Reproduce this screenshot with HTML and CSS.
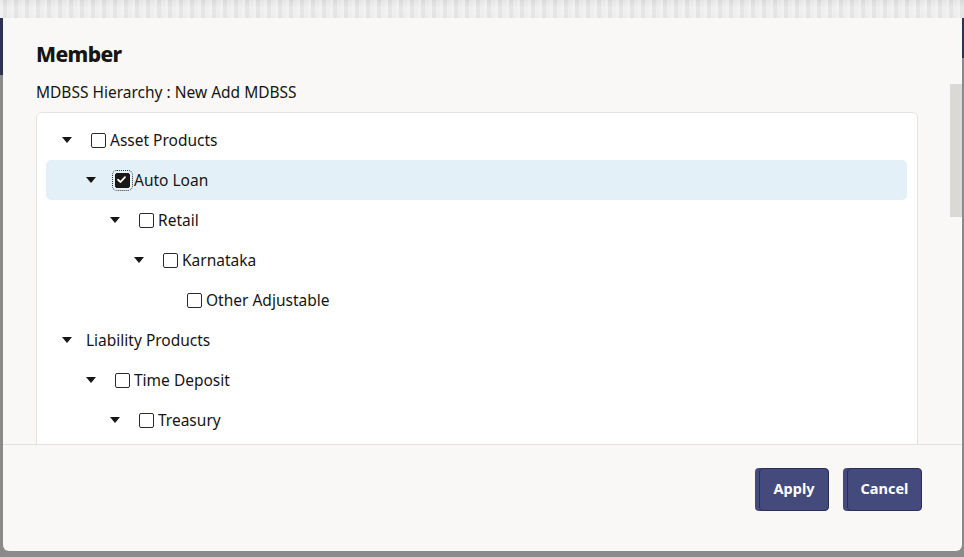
FILE: index.html
```html
<!DOCTYPE html>
<html lang="en">
<head>
<meta charset="utf-8">
<title>Member</title>
<link rel="stylesheet" href="styles.css">
</head>
<body>
<div class="top-band"></div>
<div class="stage">
  <div class="edge edge-left"></div>
  <div class="modal">
    <div class="modal-body">
      <div class="content">
        <h1 class="title">Member</h1>
        <div class="subtitle">MDBSS Hierarchy : New Add MDBSS</div>
        <div class="tree">
          <div class="row lvl0"><span class="caret"></span><span class="cb"></span><span class="label">Asset Products</span></div>
          <div class="row lvl1 selected"><span class="caret"></span><span class="cb checked"><svg viewBox="0 0 15 15" width="15" height="15"><path d="M4 7.8 L6.5 10 L11 5.2" fill="none" stroke="#fff" stroke-width="1.8" stroke-linecap="round" stroke-linejoin="round"/></svg></span><span class="label">Auto Loan</span></div>
          <div class="row lvl2"><span class="caret"></span><span class="cb"></span><span class="label">Retail</span></div>
          <div class="row lvl3"><span class="caret"></span><span class="cb"></span><span class="label">Karnataka</span></div>
          <div class="row lvl4"><span class="caret none"></span><span class="cb"></span><span class="label">Other Adjustable</span></div>
          <div class="row lvl0"><span class="caret"></span><span class="label">Liability Products</span></div>
          <div class="row lvl1"><span class="caret"></span><span class="cb"></span><span class="label">Time Deposit</span></div>
          <div class="row lvl2"><span class="caret"></span><span class="cb"></span><span class="label">Treasury</span></div>
        </div>
      </div>
      <div class="scroll-track"><div class="scroll-thumb"></div></div>
    </div>
    <div class="modal-footer">
      <button class="btn btn-apply">Apply</button>
      <button class="btn btn-cancel">Cancel</button>
    </div>
  </div>
  <div class="edge edge-right"></div>
</div>
</body>
</html>
```
FILE: styles.css
```css
* { box-sizing: border-box; }
html, body { margin: 0; padding: 0; }
body {
  width: 964px;
  height: 557px;
  overflow: hidden;
  background: #8b8b8b;
  font-family: "Noto Sans", "Liberation Sans", sans-serif;
  color: #161513;
}
.top-band {
  height: 18px;
  background-color: #e8e8e8;
  background-image:
    repeating-linear-gradient(90deg, rgba(255,255,255,0.35) 0 3px, rgba(0,0,0,0.025) 3px 7px, rgba(255,255,255,0.2) 7px 11px),
    linear-gradient(180deg, #dedede 0, #ececec 45%, #e8e8e8 100%);
}
.stage {
  display: flex;
  height: 539px;
}
.edge { flex: none; }
.edge-left {
  width: 3px;
  background: linear-gradient(180deg, #2d3152 0 57px, #8a8a8a 57px);
}
.edge-right {
  width: 2px;
  background: linear-gradient(180deg, #2d3152 0 40px, #8a8a8a 40px);
}
.modal {
  width: 959px;
  height: 533px;
  background: #f9f8f6;
  border-radius: 0 0 6px 6px;
  display: flex;
  flex-direction: column;
  overflow: hidden;
}
.modal-body {
  flex: 1;
  display: flex;
  overflow: hidden;
}
.content {
  flex: 1;
  padding: 22px 32px 0 33px;
  overflow: hidden;
}
.title {
  margin: 0;
  font-size: 21px;
  line-height: 28px;
  font-weight: 800;
  letter-spacing: -0.6px;
}
.subtitle {
  margin-top: 12px;
  font-size: 15.5px;
  line-height: 24px;
}
.tree {
  margin-top: 8px;
  background: #ffffff;
  border: 1px solid #e4e3e0;
  border-radius: 6px;
  padding: 7px 10px 10px 9px;
}
.row {
  height: 40px;
  display: flex;
  align-items: center;
  border-radius: 5px;
  font-size: 15.5px;
}
.row.selected { background: #e3f0f7; }
.lvl0 { padding-left: 16px; }
.lvl1 { padding-left: 40px; }
.lvl2 { padding-left: 64px; }
.lvl3 { padding-left: 88px; }
.lvl4 { padding-left: 112px; }
.caret {
  flex: none;
  width: 24px;
  height: 6px;
  position: relative;
}
.caret::before {
  content: "";
  position: absolute;
  left: 0;
  top: 0;
  border-left: 5.5px solid transparent;
  border-right: 5.5px solid transparent;
  border-top: 6px solid #161513;
}
.caret.none::before { display: none; }
.cb {
  flex: none;
  width: 15px;
  height: 15px;
  margin-left: 5px;
  margin-right: 4px;
  border: 1.6px solid #2b2a28;
  border-radius: 2px;
  background: #fff;
  position: relative;
}
.cb.checked {
  background: #1a1816;
  border-color: #1a1816;
  outline: 1px dotted #333;
  outline-offset: 2px;
}
.cb svg { display: block; position: absolute; left: -1.6px; top: -1.6px; }
.label { white-space: nowrap; }
.scroll-track {
  flex: none;
  width: 12px;
  padding-top: 66px;
}
.scroll-thumb {
  height: 133px;
  background: #dbd9d6;
}
.modal-footer {
  flex: none;
  height: 107px;
  border-top: 1px solid #e2e0dd;
  display: flex;
  justify-content: flex-end;
  align-items: flex-start;
  gap: 14px;
  padding: 23px 40px 0 0;
}
.btn {
  height: 43px;
  margin-left: 4px;
  background: #454a7c;
  color: #ffffff;
  border: 1px solid #2c2f55;
  border-radius: 4px;
  box-shadow: -4px 0 0 0 #454a7c;
  font-family: "Noto Sans", "Liberation Sans", sans-serif;
  font-size: 14.5px;
  font-weight: 700;
  line-height: 18px;
  padding: 0 0 4px;
  cursor: pointer;
}
.btn-apply { width: 70px; }
.btn-cancel { width: 75px; }
```
